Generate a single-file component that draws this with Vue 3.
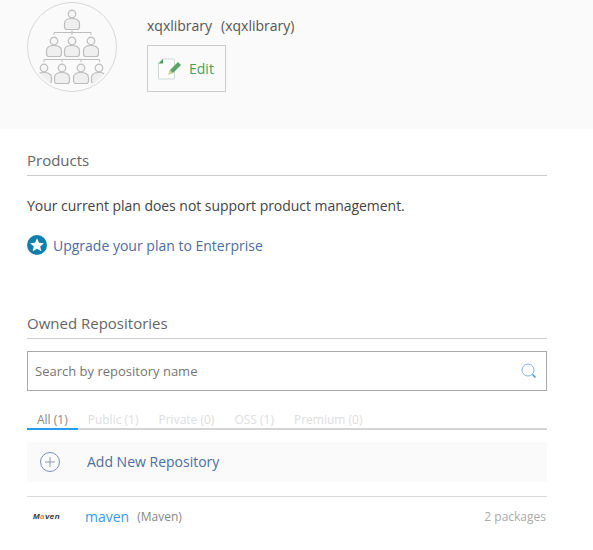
<script setup>
const tabs = [
  { label: 'All (1)', active: true },
  { label: 'Public (1)' },
  { label: 'Private (0)' },
  { label: 'OSS (1)' },
  { label: 'Premium (0)' }
]

// head position of every person in the org chart
const people = [
  [45, 12],
  [27, 39], [45, 39], [64, 39],
  [17, 66], [35, 66], [54, 66], [72, 66]
]
</script>

<template>
  <div class="page">
    <header class="org-header">
      <div class="avatar">
        <svg width="90" height="90" viewBox="0 0 90 90">
          <defs>
            <clipPath id="circle-clip"><circle cx="45" cy="45" r="42" /></clipPath>
          </defs>
          <circle cx="45" cy="45" r="44.500" fill="#fafafa" stroke="#d8d8d8" />
          <path d="M27 33v-2.500h37V33M45 28v5M17 60v-2.500h55.500V60M35 57v3M54 57v3" fill="none" stroke="#bdbdbd" stroke-width="1" />
          <g clip-path="url(#circle-clip)">
            <g v-for="(p, i) in people" :key="i" :transform="`translate(${p[0]} ${p[1]})`">
              <circle r="3.800" fill="#f6f6f6" stroke="#bdbdbd" stroke-width="1.200" />
              <path d="M-7.500 13v-3.500C-7.500 6-4 4.500 0 4.500S7.500 6 7.500 9.500V13a2.500 2.500 0 0 1-2.500 2.500H-5A2.500 2.500 0 0 1-7.500 13z" fill="#efefef" stroke="#bdbdbd" stroke-width="1.200" />
            </g>
          </g>
        </svg>
      </div>
      <div class="org-info">
        <div class="org-name"><span>xqxlibrary</span><span>(xqxlibrary)</span></div>
        <button class="edit-btn">
          <svg width="25" height="24" viewBox="0 0 25 24">
            <path d="M5.500 2h11a1 1 0 0 1 1 1v18a1 1 0 0 1-1 1h-14a1 1 0 0 1-1-1V6z" fill="#fcfcfc" stroke="#cdd9d6" stroke-width="1" />
            <path d="M1.500 6.500L6 2v4.500z" fill="#4a9e5c" />
            <path d="M11.500 17.500l1.500-4.500 8-8 3 3-8 8z" fill="#5aa469" />
            <path d="M11.500 17.500l1.500-4.500 3 3z" fill="#d9cf9a" />
          </svg>
          <span>Edit</span>
        </button>
      </div>
    </header>

    <section class="products">
      <h3 class="section-title">Products</h3>
      <p class="plan-note">Your current plan does not support product management.</p>
      <a class="upgrade">
        <svg width="20" height="20" viewBox="0 0 20 20">
          <circle cx="10" cy="10" r="10" fill="#0f7fb0" />
          <path d="M10 3.200l2 4.500 4.900.5-3.700 3.200 1.100 4.800-4.300-2.500-4.300 2.500 1.100-4.800-3.700-3.200 4.900-.5z" fill="#fff" />
        </svg>
        <span>Upgrade your plan to Enterprise</span>
      </a>
    </section>

    <section class="repos">
      <h3 class="section-title">Owned Repositories</h3>
      <div class="search">
        <input type="text" placeholder="Search by repository name" />
        <svg width="16" height="16" viewBox="0 0 16 16">
          <circle cx="7" cy="7" r="6" fill="none" stroke="#7fb2f0" stroke-width="1" />
          <path d="M11.500 11.500l3 3" stroke="#3a9ae8" stroke-width="1.500" />
        </svg>
      </div>
      <nav class="tabs">
        <span v-for="tab in tabs" :key="tab.label" class="tab" :class="{ active: tab.active }">{{ tab.label }}</span>
      </nav>
      <div class="add-row">
        <svg width="20" height="20" viewBox="0 0 20 20">
          <circle cx="10" cy="10" r="9.500" fill="none" stroke="#7d8db5" stroke-width="1" />
          <path d="M10 5v10M5 10h10" stroke="#8d98b5" stroke-width="1" />
        </svg>
        <span class="add-label">Add New Repository</span>
      </div>
      <div class="repo-row">
        <span class="maven-logo">M<i>a</i>ven</span>
        <a class="repo-name">maven</a>
        <span class="repo-type">(Maven)</span>
        <span class="repo-count">2 packages</span>
      </div>
    </section>
  </div>
</template>

<style scoped>
.page {
  width: 593px;
  height: 550px;
  overflow: hidden;
  font-family: "Open Sans", sans-serif;
  font-size: 14px;
  color: #444;
  background: #fff;
}

.org-header {
  display: flex;
  gap: 30px;
  height: 129px;
  padding: 2px 0 0 27px;
  box-sizing: border-box;
  background: #fafafa;
}

.avatar {
  width: 90px;
  height: 90px;
}

.org-name {
  display: flex;
  gap: 9px;
  margin-top: 14px;
  line-height: 19px;
  color: #555;
}

.edit-btn {
  display: flex;
  align-items: center;
  gap: 7px;
  width: 79px;
  height: 47px;
  margin-top: 10px;
  padding: 0 0 0 9px;
  border: 1px solid #ccc;
  background: #fafafa;
  color: #4a9e5c;
  font-family: inherit;
  font-size: 14px;
}

.edit-btn span {
  padding-bottom: 1px;
}

.products {
  padding: 22px 46px 0 27px;
}

.section-title {
  margin: 0;
  padding-bottom: 5px;
  border-bottom: 1px solid #ccc;
  font-size: 15px;
  font-weight: 400;
  line-height: 19px;
  color: #666;
}

.plan-note {
  margin: 20px 0 0;
  line-height: 19px;
  letter-spacing: -0.04px;
}

.upgrade {
  display: flex;
  align-items: center;
  gap: 6px;
  margin-top: 20px;
  color: #4d6e9f;
}

.repos {
  padding: 59px 46px 0 27px;
}

.search {
  display: flex;
  align-items: center;
  height: 40px;
  margin-top: 12px;
  padding: 0 9px 0 7px;
  box-sizing: border-box;
  border: 1px solid #aaa;
}

.search input {
  flex: 1;
  border: none;
  outline: none;
  padding: 0;
  background: none;
  font-family: inherit;
  font-size: 13px;
}

.search input::placeholder {
  color: #777;
  opacity: 1;
}

.tabs {
  display: flex;
  height: 18px;
  margin-top: 19px;
  border-bottom: 2px solid #d4d4d4;
  font-size: 12px;
  line-height: 17px;
  color: #ddd;
}

.tab {
  height: 20px;
  box-sizing: border-box;
  padding: 1px 10px 0;
}

.tab.active {
  border-bottom: 2px solid #2b9bf0;
  color: #888;
}

.add-row {
  display: flex;
  align-items: center;
  gap: 27px;
  height: 40px;
  margin-top: 12px;
  padding-left: 13px;
  background: #fafafa;
  color: #4d6e9f;
}

.add-label {
  padding-bottom: 1px;
}

.repo-row {
  display: flex;
  align-items: center;
  height: 38px;
  margin-top: 14px;
  border-top: 1px solid #d9d9d9;
}

.maven-logo {
  width: 58px;
  padding-left: 6px;
  box-sizing: border-box;
  font-family: "Liberation Sans", sans-serif;
  font-size: 8px;
  font-weight: 700;
  font-style: italic;
  letter-spacing: 0.4px;
  color: #333;
}

.maven-logo i {
  color: #e0913a;
}

.repo-name {
  color: #3a9ae8;
}

.repo-type {
  margin-left: 8px;
  font-size: 12px;
  color: #888;
}

.repo-count {
  margin-left: auto;
  padding-right: 1px;
  font-size: 12px;
  color: #aaa;
}
</style>

<style>
html, body {
  margin: 0;
  background: #fff;
}
</style>
